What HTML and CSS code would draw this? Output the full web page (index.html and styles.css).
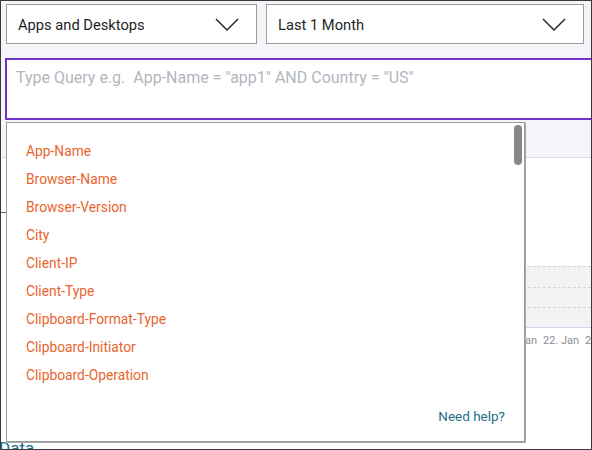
FILE: index.html
```html
<!DOCTYPE html>
<html>
<head>
<meta charset="utf-8">
<link rel="stylesheet" href="styles.css">
</head>
<body>
<div class="frame">
  <div class="filters">
    <div class="select select-type">
      <span class="select-label">Apps and Desktops</span>
      <svg class="chev" width="24" height="13" viewBox="0 0 24 13"><path d="M1 1 L12 12 L23 1" fill="none" stroke="#2b2b2b" stroke-width="1.5"/></svg>
    </div>
    <div class="select select-range">
      <span class="select-label">Last 1 Month</span>
      <svg class="chev" width="24" height="13" viewBox="0 0 24 13"><path d="M1 1 L12 12 L23 1" fill="none" stroke="#2b2b2b" stroke-width="1.5"/></svg>
    </div>
  </div>
  <div class="query">Type Query e.g.&nbsp; App-Name = "app1" AND Country = "US"</div>
  <div class="band"></div>
  <div class="content">
    <div class="tick"></div>
    <div class="plot">
      <div class="grid g1"></div>
      <div class="grid g2"></div>
      <div class="grid g3"></div>
    </div>
    <div class="xlabels">
      <span>10. Jan</span><span>12. Jan</span><span>14. Jan</span><span>16. Jan</span><span>18. Jan</span><span>20. Jan</span><span>22. Jan</span><span>24. Jan</span>
    </div>
    <div class="section-title">Data</div>
  </div>

  <div class="suggest">
    <ul class="suggest-list">
      <li>App-Name</li>
      <li>Browser-Name</li>
      <li>Browser-Version</li>
      <li>City</li>
      <li>Client-IP</li>
      <li>Client-Type</li>
      <li>Clipboard-Format-Type</li>
      <li>Clipboard-Initiator</li>
      <li>Clipboard-Operation</li>
    </ul>
    <div class="suggest-foot"><a class="help">Need help?</a></div>
    <div class="thumb"></div>
  </div>
</div>
</body>
</html>
```

FILE: styles.css
```css
* { box-sizing: border-box; }
html, body { margin: 0; padding: 0; background: #fff; }
body { font-family: Roboto, "Liberation Sans", sans-serif; }

.frame {
  position: relative;
  width: 592px;
  height: 450px;
  border: 1px solid #3a3a3a;
  background: #f4f5f9;
  overflow: hidden;
  display: flex;
  flex-direction: column;
}
.frame > * { flex: none; }

.filters {
  display: flex;
  gap: 9px;
  padding: 3px 0 0 5px;
}
.select {
  height: 40px;
  background: #fff;
  border: 1px solid #9b9b9b;
  display: flex;
  align-items: center;
  justify-content: space-between;
  padding: 2px 17px 0 11px;
}
.select-type { width: 251px; }
.select-range { width: 318px; }
.select-label {
  font-size: 14.7px;
  color: #1f1f1f;
}
.chev { display: block; margin-top: -1px; }

.query {
  margin: 14px -8px 0 4px;
  height: 62px;
  background: #fff;
  border: 2px solid #7033c8;
  padding: 8px 9px;
  font-size: 16px;
  line-height: 20px;
  color: #b3b6be;
  white-space: nowrap;
}

.band {
  height: 38px;
  border-bottom: 1px solid #dcdde3;
}

.content {
  flex: 1 1 auto;
  min-height: 0;
  background: #fff;
  display: flex;
  flex-direction: column;
}
.content > * { flex: none; }
.tick {
  width: 5px;
  height: 1px;
  background: #666;
  margin-top: 54px;
}
.plot {
  margin: 53px 0 0 40px;
  height: 62px;
  background: #f3f3f6;
  border-top: 1px dashed #d4d4d8;
  border-bottom: 1px solid #ccd6eb;
  display: flex;
  flex-direction: column;
}
.grid { border-bottom: 1px dashed #d4d4d8; flex: none; }
.g1 { height: 21px; }
.g2 { height: 20px; }
.g3 { height: 19px; border-bottom: none; }
.xlabels {
  display: flex;
  padding-left: 290px;
  margin-top: 6px;
  font-size: 11px;
  color: #8a8d93;
  line-height: 14px;
  white-space: nowrap;
}
.xlabels span { width: 42px; flex: none; }
.section-title {
  margin-top: 90px;
  font-size: 17px;
  line-height: 20px;
  color: #1e6e88;
  margin-left: -2px;
}

.suggest {
  position: absolute;
  left: 5px;
  top: 121px;
  width: 519px;
  height: 320px;
  background: #fff;
  border: 1px solid #9a9a9a;
  box-shadow: 1px 1px 0 #a8a8a8;
  display: flex;
  flex-direction: column;
  justify-content: space-between;
}
.suggest-list {
  list-style: none;
  margin: 0;
  padding: 14px 19px 0;
}
.suggest-list li {
  font-size: 13.8px;
  line-height: 28px;
  color: #e8652e;
}
.suggest-foot {
  display: flex;
  justify-content: flex-end;
  padding: 0 19px 15px;
}
.help {
  font-size: 13.5px;
  line-height: 20px;
  color: #1e6e88;
}
.thumb {
  position: absolute;
  right: 2px;
  top: 2px;
  width: 8px;
  height: 40px;
  border-radius: 4px;
  background: #868686;
}
```
